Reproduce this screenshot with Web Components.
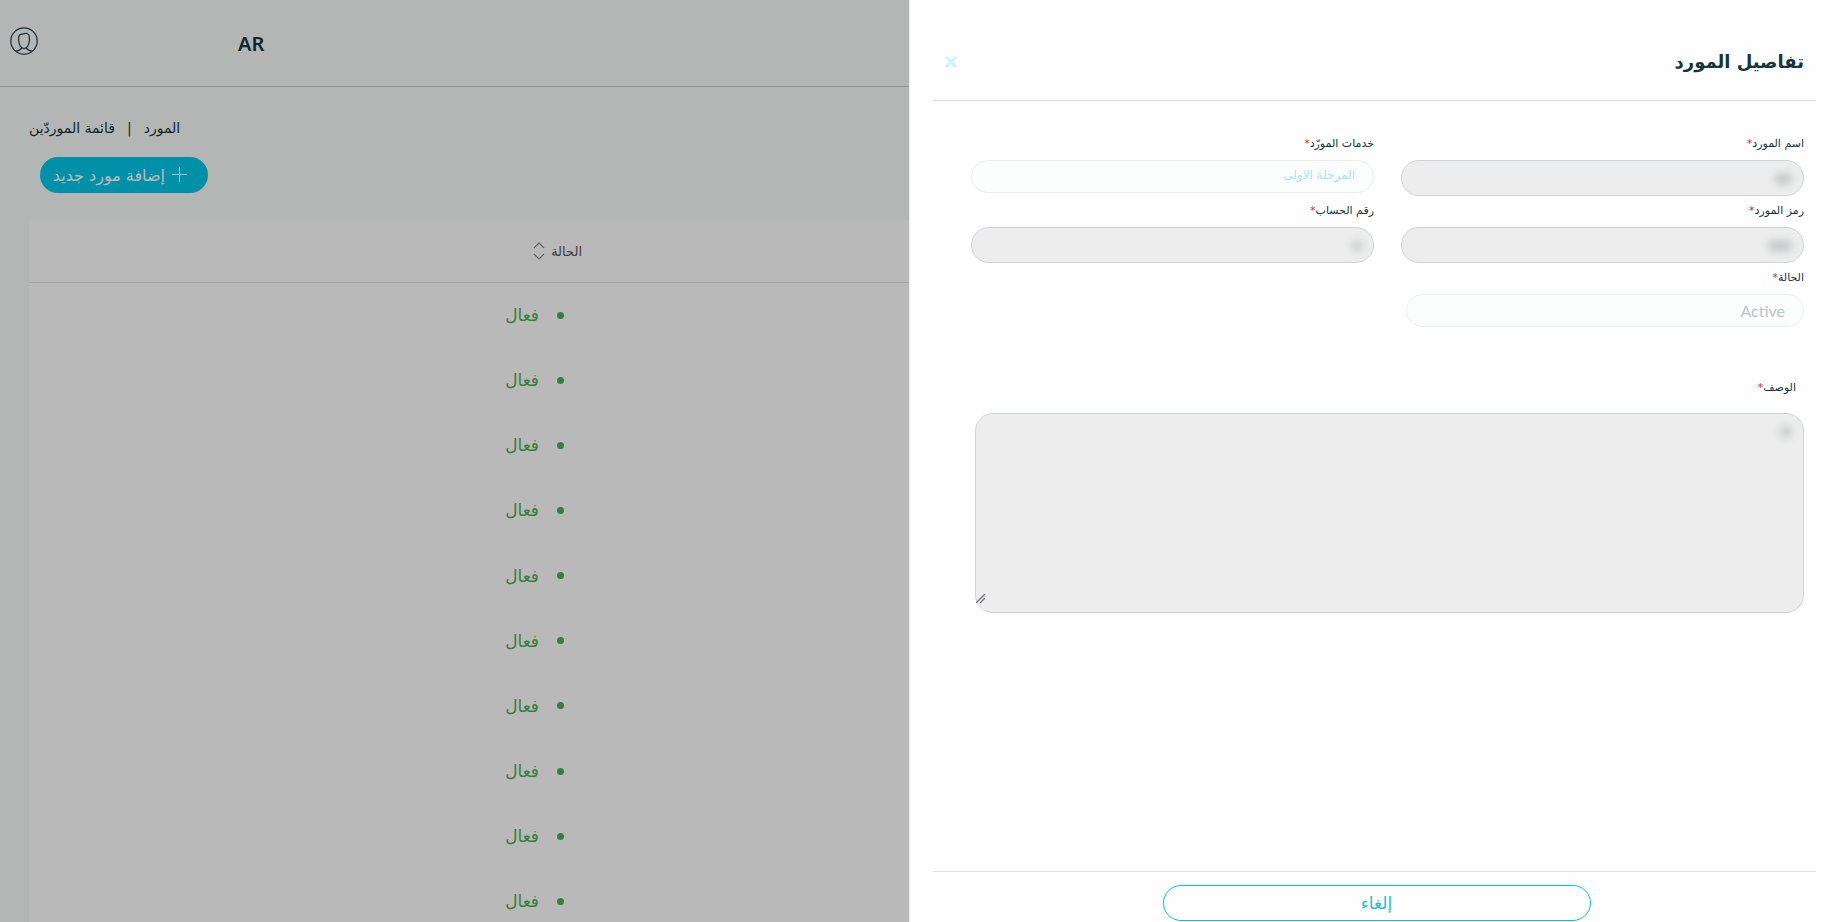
<!DOCTYPE html>
<html lang="ar" dir="rtl">
<head>
<meta charset="utf-8">
<title>تفاصيل المورد</title>
<style>
  html, body { margin: 0; height: 100%; }
  body { font-family: "DejaVu Sans", sans-serif; color: #14353f; overflow: hidden; }
</style>
</head>
<body>
<vendor-app></vendor-app>
<script>
const define = (name, html, setup) => {
  const template = document.createElement('template');
  template.innerHTML = html;
  customElements.define(name, class extends HTMLElement {
    constructor() {
      super();
      this.attachShadow({ mode: 'open' }).append(template.content.cloneNode(true));
    }
    connectedCallback() { if (setup) setup(this, this.shadowRoot); }
  });
};

define('top-bar', `
<style>
  :host { display: flex; align-items: center; direction: ltr; height: 86px; border-bottom: 1px solid #c6cad3; padding: 0 10px; }
  button { border: 0; background: none; padding: 0; margin: 0; color: inherit; font: 600 20px "Noto Sans", sans-serif; }
  .user { width: 28px; height: 28px; margin-bottom: 4px; }
  .lang { margin-left: 200px; }
  svg { display: block; }
</style>
<button class="user" aria-label="الحساب"><svg width="28" height="28" viewBox="0 0 28 28" fill="none" stroke="#193f4c" stroke-width="1.200"><circle cx="14" cy="14" r="13.2"/><path d="M8.800 9.500C9 7.200 11 7.400 13 6.800C15.500 6.200 19 5.800 19.200 9L19.500 13C19.300 17 17.500 21.500 14 21.500C10.500 21.500 8.700 17 8.700 13ZM11.500 20.800C11.500 23.500 8.500 23.200 6 24.200M16.500 20.800C16.500 23.500 19.500 23.200 22 24.200"/></svg></button>
<button class="lang">AR</button>`);

define('crumb-trail', `
<style>
  :host { display: block; }
  nav { display: flex; gap: 12px; font-size: 14px; line-height: 20px; }
  a { color: inherit; text-decoration: none; }
</style>
<nav><a href="#vendor">المورد</a><span>|</span><a href="#list">قائمة الموردّين</a></nav>`);

define('add-button', `
<style>
  :host { display: block; }
  button { display: flex; align-items: center; gap: 7px; height: 36px; width: 168px; padding: 0 20px; border: 0; border-radius: 18px; background: #00c8e8; color: #fff; font: 16px "DejaVu Sans", sans-serif; white-space: nowrap; }
  svg { flex: none; }
</style>
<button><svg width="16" height="16" viewBox="0 0 16 16" stroke="#fff"><path d="M7.500 0V15M0 7.500H15"/></svg><slot></slot></button>`);

define('vendor-table', `
<style>
  :host { display: block; background: #fff; }
  table { width: 100%; height: 714px; border-collapse: collapse; table-layout: fixed; }
  th { height: 62px; padding: 0; border-bottom: 1px solid #e4e6e6; font-weight: 400; font-size: 13px; color: #555; }
  td { padding: 0; font-size: 17px; color: #4caf50; }
  .edge { width: 467px; }
  .head { display: flex; align-items: center; gap: 6px; padding-inline-start: 10px; }
  .state { display: flex; align-items: center; gap: 18px; line-height: 20px; padding-inline-start: 28px; }
  .col { width: 96px; }
  tr { height: 65px; }
  i { width: 7px; height: 7px; border-radius: 50%; background: #4caf50; flex: none; }
</style>
<table><colgroup><col><col class="col"><col class="edge"></colgroup>
<thead><tr><th></th><th><div class="head">الحالة<svg width="12" height="18" viewBox="0 0 12 18" fill="none" stroke="#888" stroke-width="1.200"><path d="M1 6L6 1L11 6M1 12L6 17L11 12"/></svg></div></th><th></th></tr></thead>
<tbody></tbody></table>`, (host, root) => {
  root.querySelector('thead tr').style.height = '62px';
  root.querySelector('tbody').innerHTML =
    '<tr><td></td><td><div class="state"><i></i>فعال</div></td><td></td></tr>'.repeat(10);
});

define('vendor-page', `
<style>
  :host { display: block; background: #f9fbfa; min-height: 100%; }
  main { padding: 31px 0 0 29px; }
  .bar { display: flex; flex-direction: column; align-items: flex-end; }
  add-button { margin: 19px 0 27px 11px; }
</style>
<top-bar></top-bar>
<main><div class="bar"><crumb-trail></crumb-trail><add-button>إضافة مورد جديد</add-button></div><vendor-table></vendor-table></main>`);

define('form-field', `
<style>
  :host { display: block; }
  label { display: block; font-size: 11px; line-height: 18px; margin-bottom: 7px; }
  label span { color: #c0303c; }
  :host([kind="textarea"]) label { margin: 0 8px 16px 0; }
  .box { position: relative; }
  input, select, textarea { box-sizing: border-box; display: block; width: 100%; margin: 0; border: 1px solid #ced4da; border-radius: 18px; background: #ededed; font: 12px "DejaVu Sans", sans-serif; appearance: none; }
  input { height: 36px; }
  select { height: 33px; padding: 0 18px 4px; background: #fbfefd; border-color: #ebefee; opacity: 1; color: #9ee6f1; }
  :host([latin]) select { padding-bottom: 0; color: #bfc0c8; font: 16px Lato, sans-serif; }
  textarea { height: 200px; resize: none; }
  .grip, .mask { position: absolute; }
  .grip { left: 1px; bottom: 10px; }
  .mask { right: 12px; top: 14px; height: 10px; border-radius: 6px; background: #bfc3c3; filter: blur(4px); }
</style>
<label for="c"><b></b><span>*</span></label>
<div class="box"></div>`, (host, root) => {
  const kind = host.getAttribute('kind');
  root.querySelector('b').replaceWith(host.getAttribute('label'));
  const mask = `<div class="mask" style="width:${host.getAttribute('mask')}px"></div>`;
  root.querySelector('.box').innerHTML = {
    input: '<input id="c" disabled>' + mask,
    select: `<select id="c" disabled><option>${host.getAttribute('value')}</option></select>`,
    textarea: '<textarea id="c" disabled></textarea>' + mask +
      '<svg class="grip" width="9" height="9" viewBox="0 0 9 9" stroke="#747080" stroke-width="1.300"><path d="M0 9L9 0M4 9L9 4"/></svg>'
  }[kind];
});

define('vendor-panel', `
<style>
  :host { display: flex; flex-direction: column; box-sizing: border-box; background: #fefefe; border-left: 1px solid #e9ebeb; padding: 0 16px 1px 23px; }
  header { display: flex; justify-content: space-between; align-items: center; height: 101px; box-sizing: border-box; padding: 23px 12px 0; border-bottom: 1px solid #dcdee6; }
  h1 { margin: 0; font-size: 18px; line-height: 28px; font-weight: 700; }
  button { background: none; margin: 0; padding: 0; border: 0; }
  .close svg { display: block; }
  form { flex: 1; padding: 34px 12px 0 38px; }
  .grid { display: grid; grid-template-columns: 1fr 1fr; column-gap: 27px; row-gap: 6px; align-items: start; }
  .status { margin-left: 5px; }
  .note { margin: 52px 0 0 4px; }
  footer { display: flex; justify-content: center; border-top: 1px solid #dedede; padding: 13px 0 0 4px; }
  .cancel { width: 428px; height: 36px; border: 1px solid #00c3dc; border-radius: 18px; color: #1cbdd3; font: 17px "DejaVu Sans", sans-serif; }
</style>
<header><h1>تفاصيل المورد</h1><button class="close" aria-label="إغلاق"><svg width="12" height="12" viewBox="0 0 12 12" stroke="#c9f4fa" stroke-width="3"><path d="M1 1L11 11M11 1L1 11"/></svg></button></header>
<form><div class="grid">
<form-field kind="input" label="اسم المورد" mask="18"></form-field>
<form-field kind="select" label="خدمات المورّد" value="المرحلة الاولى"></form-field>
<form-field kind="input" label="رمز المورد" mask="24"></form-field>
<form-field kind="input" label="رقم الحساب" mask="10"></form-field>
<form-field class="status" kind="select" label="الحالة" value="Active" latin></form-field>
</div><form-field class="note" kind="textarea" label="الوصف" mask="12"></form-field></form>
<footer><button class="cancel">إلغاء</button></footer>`);

define('vendor-app', `
<style>
  :host { display: grid; grid-template-columns: 923fr 909fr; height: 100vh; overflow: hidden; }
  .back { position: relative; overflow: hidden; }
  .shade { position: absolute; inset: 0; background: rgba(0, 0, 0, 0.275); }
</style>
<vendor-panel></vendor-panel>
<div class="back"><vendor-page></vendor-page><div class="shade"></div></div>`);
</script>
</body>
</html>
